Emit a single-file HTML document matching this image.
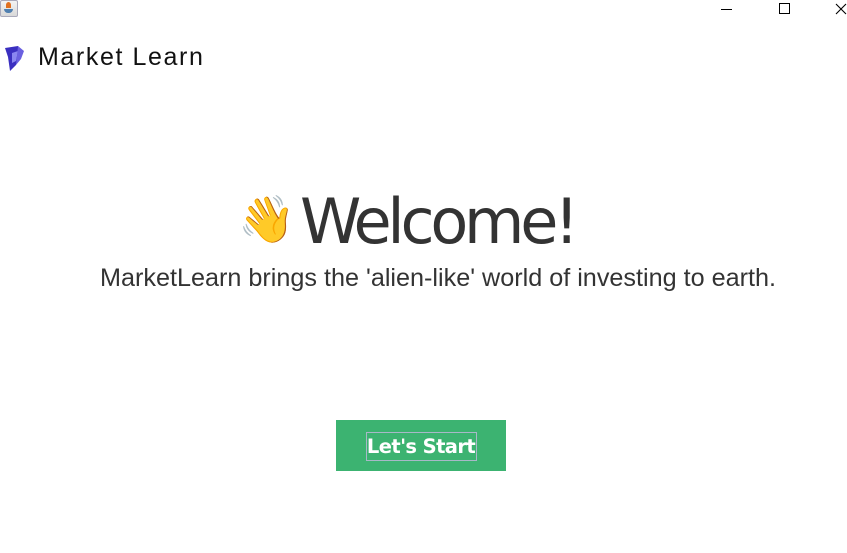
<!DOCTYPE html>
<html><head><style>
body{margin:0;width:847px;height:553px;background:#fff;position:relative;overflow:hidden;font-family:"Liberation Sans",sans-serif}
.a{position:absolute}
</style></head><body>
<div class="a" style="left:0;top:0;width:18px;height:17px;background:linear-gradient(#f4f4f4,#d8d8d8);border:1px solid #aab;box-sizing:border-box;border-radius:2px"></div>
<div class="a" style="left:6px;top:2px;width:5px;height:6px;background:#e07020;border-radius:50% 50% 0 0"></div>
<div class="a" style="left:4px;top:9px;width:9px;height:4px;background:#5080b0;border-radius:0 0 4px 4px"></div>
<div class="a" style="left:721px;top:9px;width:11px;height:1px;background:#000"></div>
<div class="a" style="left:779px;top:3px;width:11px;height:11px;border:1px solid #000;box-sizing:border-box"></div>
<svg class="a" style="left:835px;top:3px" width="12" height="12"><path d="M1 1L11 11M11 1L1 11" stroke="#000" stroke-width="1.1"/></svg>
<svg class="a" style="left:4px;top:45px" width="22" height="28"><path d="M1 3L14 1L17 8L12 20L6 26L4 12Z" fill="#3a2fc0"/><path d="M8 8L14 6L12 16L8 18Z" fill="#8a86f0"/><path d="M14 1L20 6L17 14L12 20Z" fill="#6a60e0"/></svg>
<div class="a" style="left:38px;top:43px;font-size:25px;color:#111;letter-spacing:1.6px">Market Learn</div>
<div class="a" style="left:238px;top:194px;font-size:46px;line-height:50px">👋</div>
<div class="a" style="left:300px;top:182px;font-size:62px;color:#333;line-height:80px;font-family:'DejaVu Sans','Liberation Sans',sans-serif;letter-spacing:-4.2px">Welcome!</div>
<div class="a" style="left:100px;top:263px;font-size:25.2px;color:#333;line-height:30px;white-space:nowrap">MarketLearn brings the 'alien-like' world of investing to earth.</div>
<div class="a" style="left:336px;top:420px;width:170px;height:51px;background:#3cb371"></div>
<div class="a" style="left:366px;top:432px;width:111px;height:29px;border:1px solid #a8b8c8;box-sizing:border-box"></div>
<div class="a" style="left:336px;top:432px;width:170px;text-align:center;font-size:19.5px;font-weight:bold;color:#fff;line-height:29px;font-family:'DejaVu Sans',sans-serif;letter-spacing:-0.6px">Let's Start</div>
</body></html>
